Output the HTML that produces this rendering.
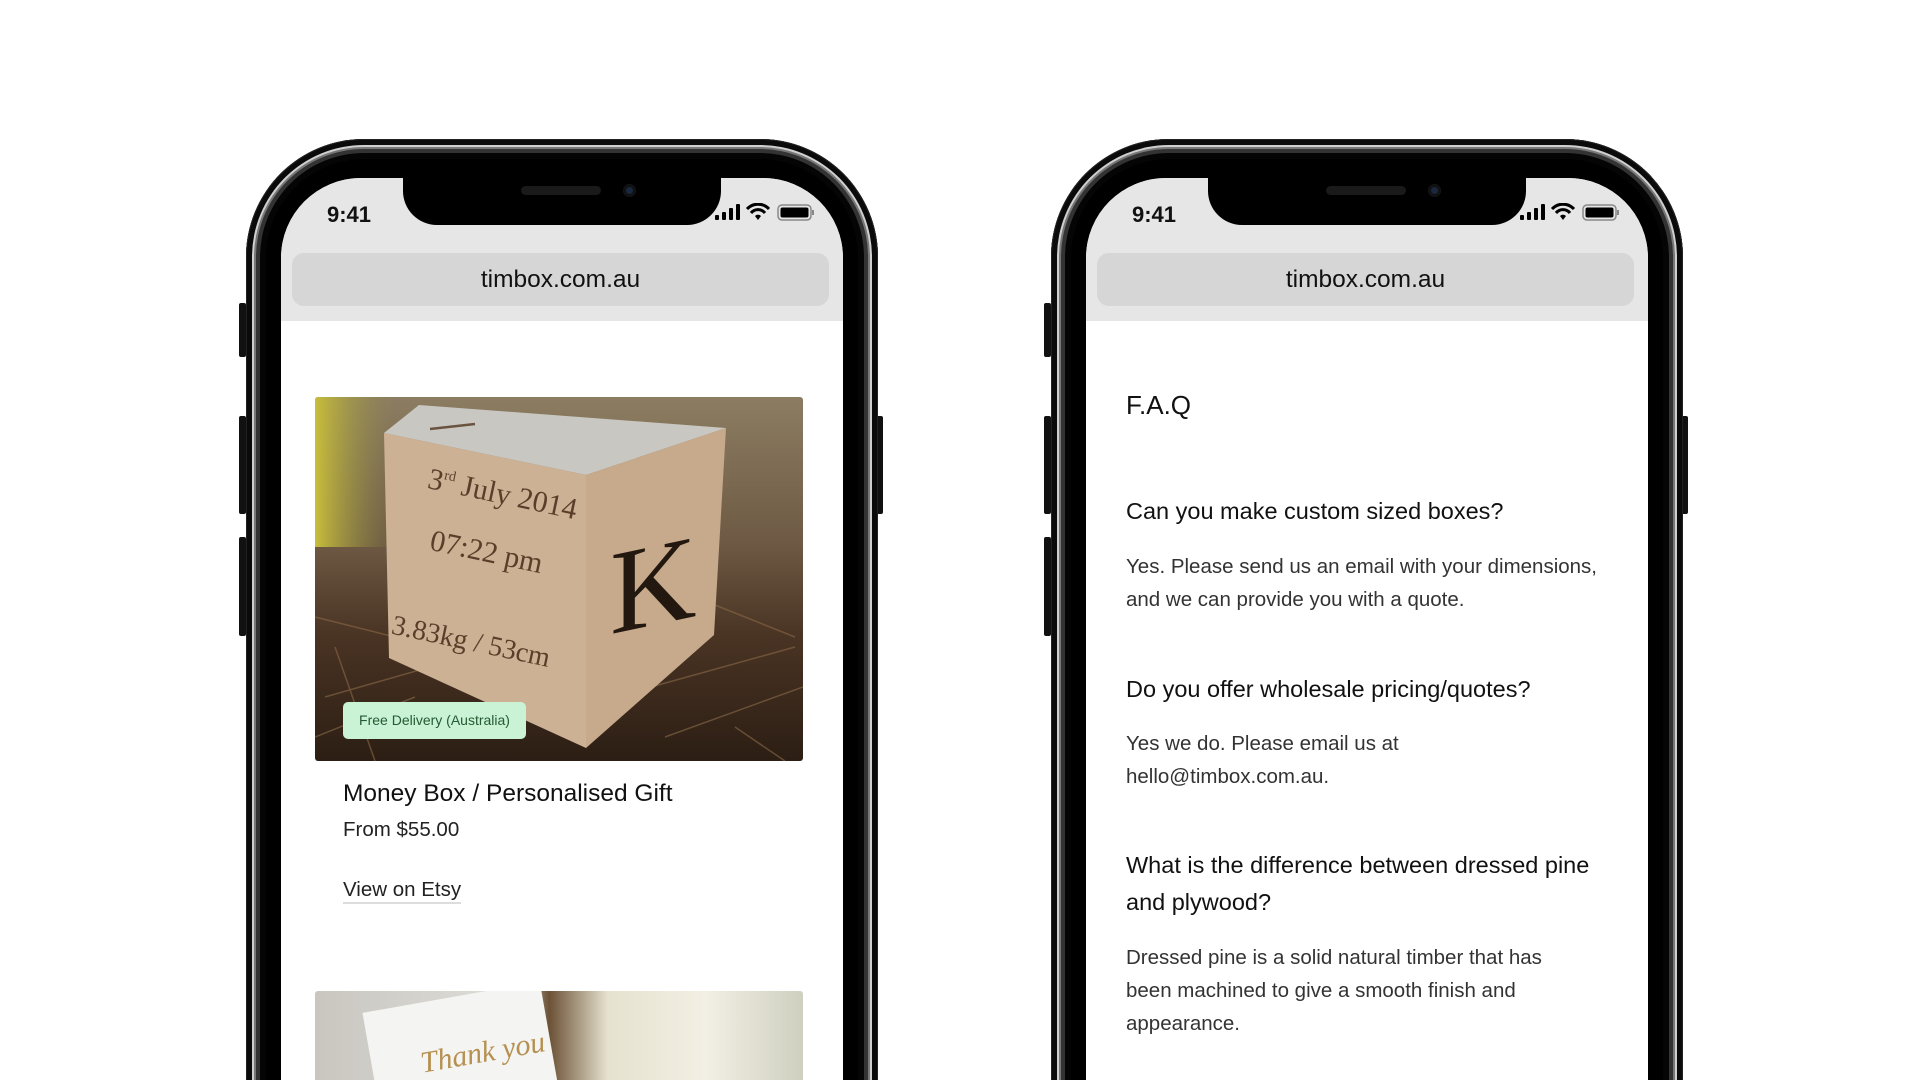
<!DOCTYPE html>
<html><head><meta charset="utf-8"><style>
*{margin:0;padding:0;box-sizing:border-box}
html,body{width:1920px;height:1080px;overflow:hidden;background:#fff;font-family:"Liberation Sans",sans-serif}
#wrap{position:relative;width:1920px;height:1080px;overflow:hidden}
.phone{position:absolute;top:139px;width:632px;height:1000px;border-radius:118px 118px 0 0;background:#000;
 box-shadow:inset 0 0 0 1px #222, inset 0 0 0 6px #0a0a0a, inset 0 0 0 8px #cfcfcf, inset 0 0 0 10px #777, inset 0 0 0 14px #333, inset 0 0 0 20px #050505}
.btn{position:absolute;width:7px;background:#111;border-radius:2px}
.screen{position:absolute;left:35px;top:39px;width:562px;height:1000px;border-radius:80px 80px 0 0;background:#fff;overflow:hidden}
.bar{position:absolute;left:0;top:0;width:100%;height:143px;background:#e6e6e6}
.notch{position:absolute;left:122px;top:-2px;width:318px;height:49px;background:#000;border-radius:0 0 34px 34px}
.notch:before{content:"";position:absolute;left:118px;top:10px;width:80px;height:9px;border-radius:5px;background:#1a1a1a}
.notch:after{content:"";position:absolute;left:220px;top:8px;width:13px;height:13px;border-radius:50%;background:#1a2740;box-shadow:inset 0 0 0 3px #111}
.time{position:absolute;left:46px;top:24px;font-size:22px;font-weight:bold;color:#111}
.url{position:absolute;left:11px;top:75px;width:537px;height:53px;border-radius:12px;background:#d6d6d6;text-align:center;line-height:53px;font-size:24.5px;color:#111}
.icons{position:absolute;left:434px;top:25px}
.t{position:absolute;color:#111;white-space:nowrap}
</style></head><body><div id="wrap">

<!-- LEFT PHONE -->
<div class="btn" style="left:239px;top:303px;height:54px"></div>
<div class="btn" style="left:239px;top:416px;height:98px"></div>
<div class="btn" style="left:239px;top:537px;height:99px"></div>
<div class="btn" style="left:876px;top:416px;height:98px"></div>
<div class="phone" style="left:246px">
 <div class="screen">
  <div class="bar"></div>
  <div class="notch"></div>
  <div class="time">9:41</div>
  <svg class="icons" width="100" height="22" viewBox="0 0 100 22">
   <rect x="0" y="12" width="4" height="5" rx="1"/><rect x="7" y="9" width="4" height="8" rx="1"/><rect x="14" y="5" width="4" height="12" rx="1"/><rect x="21" y="1" width="4" height="16" rx="1"/>
   <path d="M32 6 a15 15 0 0 1 22 0" stroke="#000" stroke-width="3" fill="none"/><path d="M36 10 a9 9 0 0 1 14 0" stroke="#000" stroke-width="3" fill="none"/><path d="M40 13 l3 4 l3 -4 a4 4 0 0 0 -6 0z"/>
   <rect x="63" y="2" width="33" height="15" rx="4" fill="none" stroke="#888" stroke-width="1.5"/><rect x="65.5" y="4.5" width="28" height="10" rx="2"/><rect x="97" y="7" width="2" height="5" fill="#888"/>
  </svg>
  <div class="url">timbox.com.au</div>
  <div style="position:absolute;left:34px;top:219px;width:488px;height:364px;overflow:hidden;border-radius:3px">
   <svg width="488" height="364" viewBox="0 0 488 364">
    <defs>
     <linearGradient id="bg" x1="0" y1="0" x2="0" y2="1"><stop offset="0" stop-color="#8c7d62"/><stop offset="0.4" stop-color="#6e5a44"/><stop offset="0.65" stop-color="#4a3424"/><stop offset="1" stop-color="#2c1e14"/></linearGradient>
     <linearGradient id="lf" x1="0" y1="0" x2="1" y2="0"><stop offset="0" stop-color="#c9be3a"/><stop offset="1" stop-color="#8c8a45" stop-opacity="0"/></linearGradient>
    </defs>
    <rect width="488" height="364" fill="url(#bg)"/>
    <rect x="0" y="0" width="80" height="150" fill="url(#lf)"/>
    <g stroke="#8a6a48" stroke-width="1.5" opacity="0.6">
     <path d="M0 220 L120 250 M10 300 L150 260 M300 300 L480 250 M350 340 L488 290 M380 200 L480 240 M0 340 L100 300 M420 330 L470 364 M20 250 L60 364"/>
    </g>
    <polygon points="69,36 104,8 411,31 271,78" fill="#c9c7c1"/>
    <polygon points="69,36 271,78 271,351 74,261" fill="#cdb194"/>
    <polygon points="271,78 411,31 399,238 271,351" fill="#c7aa8c"/>
    <line x1="115" y1="32" x2="160" y2="27" stroke="#6a5440" stroke-width="2.5"/>
    <g font-family="Liberation Serif,serif" fill="#5a3e2a" transform="rotate(12 150 150)">
     <text x="100" y="100" font-size="30">3<tspan font-size="14" dy="-12">rd</tspan><tspan dy="12"> July 2014</tspan></text>
     <text x="115" y="160" font-size="30">07:22 pm</text>
     <text x="95" y="250" font-size="28">3.83kg / 53cm</text>
    </g>
    <text x="295" y="240" font-family="Liberation Serif,serif" font-size="120" fill="#231810" transform="skewY(-12) translate(0,60)">K</text>
   </svg>
   <div style="position:absolute;left:28px;top:305px;width:183px;height:37px;background:#c9f3d4;border-radius:5px;font-size:14px;line-height:37px;text-align:center;color:#245a35">Free Delivery (Australia)</div>
  </div>
  <div class="t" style="left:62px;top:602px;font-size:24.5px">Money Box / Personalised Gift</div>
  <div class="t" style="left:62px;top:640px;font-size:20.5px;color:#222">From $55.00</div>
  <div class="t" style="left:62px;top:700px;font-size:20.5px;color:#222;border-bottom:2px solid #ddd;padding-bottom:0">View on Etsy</div>
  <div style="position:absolute;left:34px;top:813px;width:488px;height:200px;overflow:hidden;border-radius:3px;background:linear-gradient(90deg,#c9c6c0,#deddd8 40%,#6c5237 48%,#e6e2cf 60%,#f2efe4 80%,#cfd0c0)">
   <div style="position:absolute;left:60px;top:5px;width:180px;height:160px;background:#f4f4f2;transform:rotate(-10deg)"></div>
   <div style="position:absolute;left:105px;top:45px;font-family:'Liberation Serif',serif;font-style:italic;font-size:30px;color:#b59050;transform:rotate(-10deg)">Thank you</div>
  </div>
 </div>
</div>

<!-- RIGHT PHONE -->
<div class="btn" style="left:1044px;top:303px;height:54px"></div>
<div class="btn" style="left:1044px;top:416px;height:98px"></div>
<div class="btn" style="left:1044px;top:537px;height:99px"></div>
<div class="btn" style="left:1681px;top:416px;height:98px"></div>
<div class="phone" style="left:1051px">
 <div class="screen">
  <div class="bar"></div>
  <div class="notch"></div>
  <div class="time">9:41</div>
  <svg class="icons" width="100" height="22" viewBox="0 0 100 22">
   <rect x="0" y="12" width="4" height="5" rx="1"/><rect x="7" y="9" width="4" height="8" rx="1"/><rect x="14" y="5" width="4" height="12" rx="1"/><rect x="21" y="1" width="4" height="16" rx="1"/>
   <path d="M32 6 a15 15 0 0 1 22 0" stroke="#000" stroke-width="3" fill="none"/><path d="M36 10 a9 9 0 0 1 14 0" stroke="#000" stroke-width="3" fill="none"/><path d="M40 13 l3 4 l3 -4 a4 4 0 0 0 -6 0z"/>
   <rect x="63" y="2" width="33" height="15" rx="4" fill="none" stroke="#888" stroke-width="1.5"/><rect x="65.5" y="4.5" width="28" height="10" rx="2"/><rect x="97" y="7" width="2" height="5" fill="#888"/>
  </svg>
  <div class="url">timbox.com.au</div>
  <div class="t" style="left:40px;top:212px;font-size:26px">F.A.Q</div>
  <div class="t" style="left:40px;top:320px;font-size:23.5px">Can you make custom sized boxes?</div>
  <div class="t" style="left:40px;top:372px;font-size:20.5px;line-height:33px;color:#333">Yes. Please send us an email with your dimensions,<br>and we can provide you with a quote.</div>
  <div class="t" style="left:40px;top:498px;font-size:23.5px">Do you offer wholesale pricing/quotes?</div>
  <div class="t" style="left:40px;top:549px;font-size:20.5px;line-height:33px;color:#333">Yes we do. Please email us at<br>hello@timbox.com.au.</div>
  <div class="t" style="left:40px;top:669px;font-size:23.5px;line-height:37px">What is the difference between dressed pine<br>and plywood?</div>
  <div class="t" style="left:40px;top:763px;font-size:20.5px;line-height:33px;color:#333">Dressed pine is a solid natural timber that has<br>been machined to give a smooth finish and<br>appearance.</div>
 </div>
</div>
</div></body></html>
